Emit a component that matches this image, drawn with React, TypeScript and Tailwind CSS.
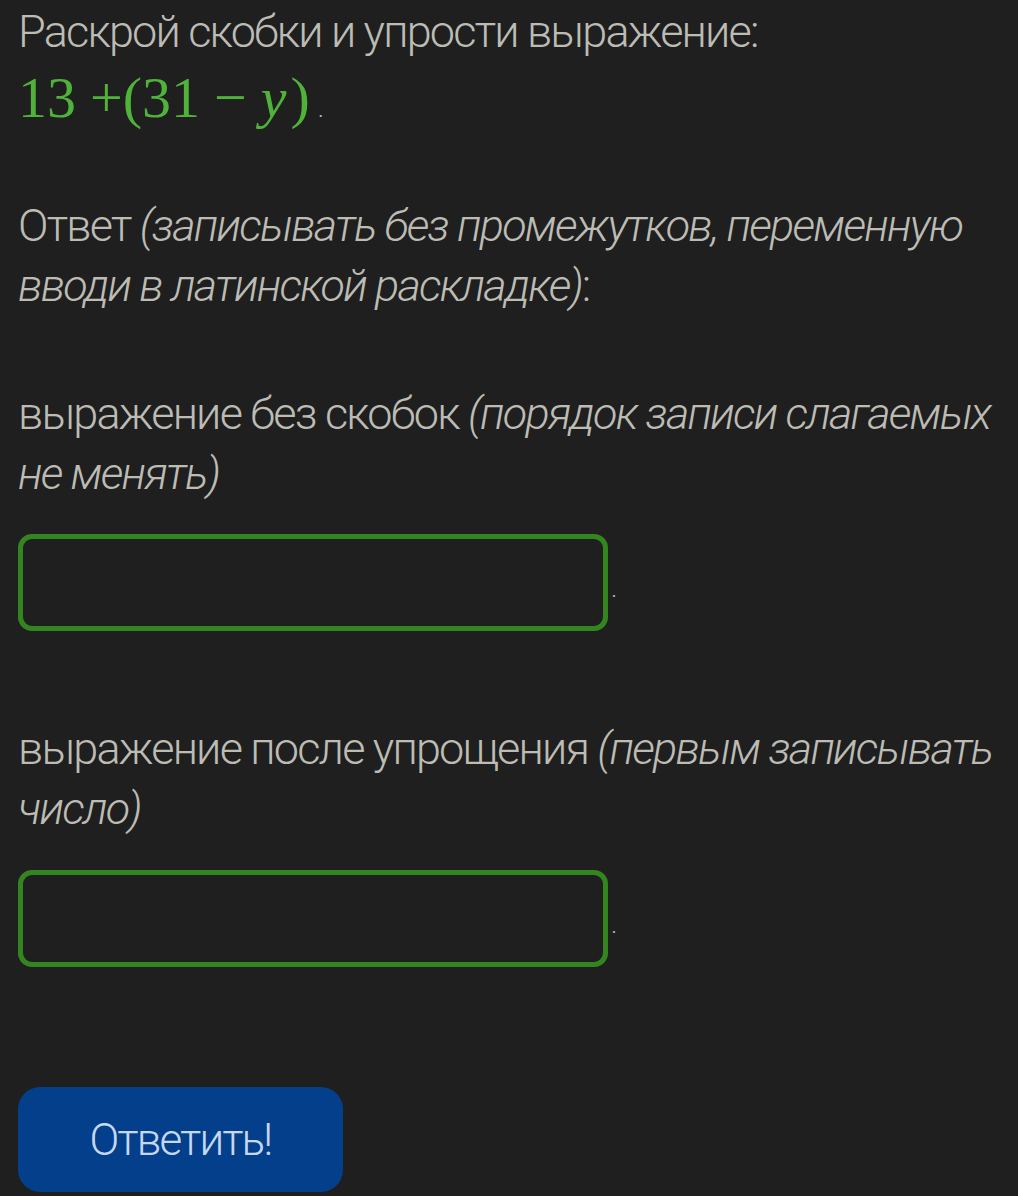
export default function App() {
  return (
    <div className="min-h-[1196px] w-[1018px] bg-[#1f1f1f] pl-[18px] pt-[2px] text-[#bcbcb4] font-['Roboto',sans-serif] font-light text-[45px] leading-[60px] tracking-[-0.04em]">
      <p>Раскрой скобки и упрости выражение:</p>
      <p className="mt-[4px] flex items-baseline leading-[64px]">
        <span className="flex items-baseline font-['Liberation_Serif',serif] font-normal text-[58px] text-[#4fb33a] tracking-normal">
          <span>13</span>
          <span className="ml-[14px]">+(31</span>
          <span className="mx-[14px]">−</span>
          <i>y</i>
          <span className="ml-[4px]">)</span>
        </span>
        <span className="ml-[8px] text-[26px]">.</span>
      </p>

      <p className="mt-[56px]">
        Ответ <i>(записывать без промежутков, переменную</i>
        <br />
        <i>вводи в латинской раскладке)</i>:
      </p>

      <p className="mt-[68px]">
        выражение без скобок <i>(порядок записи слагаемых</i>
        <br />
        <i>не менять)</i>
      </p>

      <div className="mt-[30px] flex items-end">
        <div className="h-[97px] w-[590px] rounded-[14px] border-[5px] border-[#33861f]" />
        <span className="mb-[30px] ml-[3px] text-[26px] leading-none">.</span>
      </div>

      <p className="mt-[88px]">
        выражение после упрощения <i>(первым записывать</i>
        <br />
        <i>число)</i>
      </p>

      <div className="mt-[31px] flex items-end">
        <div className="h-[97px] w-[590px] rounded-[14px] border-[5px] border-[#33861f]" />
        <span className="mb-[30px] ml-[3px] text-[26px] leading-none">.</span>
      </div>

      <button className="mt-[120px] flex h-[105px] w-[325px] items-center justify-center rounded-[22px] bg-[#033f8a] text-[44px] font-light tracking-[-0.04em] text-[#c6d7f1]">
        Ответить!
      </button>
    </div>
  );
}
